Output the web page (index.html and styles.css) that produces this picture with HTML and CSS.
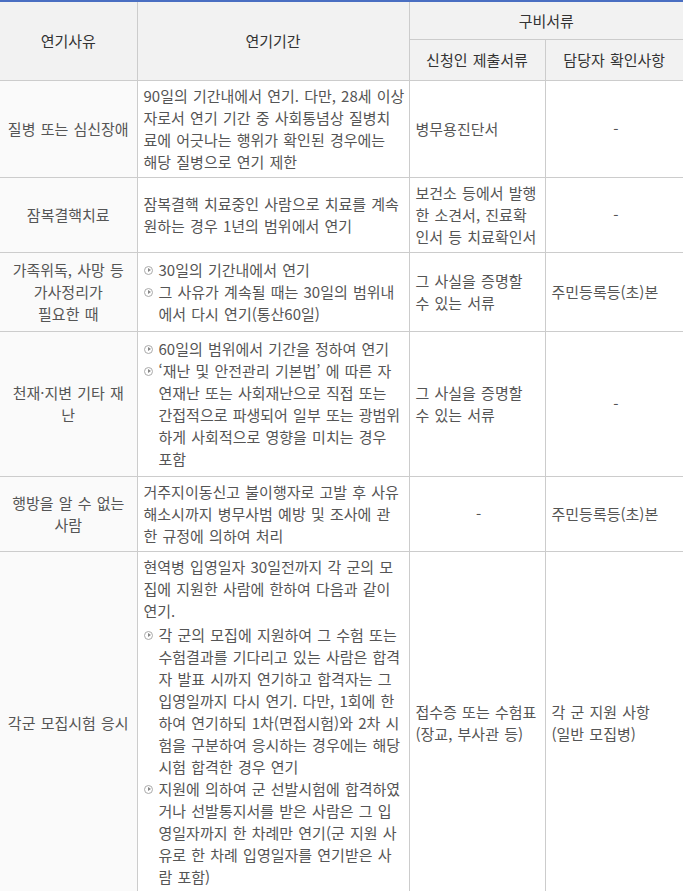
FILE: index.html
```html
<!DOCTYPE html>
<html lang="ko">
<head>
<meta charset="utf-8">
<title>연기사유</title>
<link rel="stylesheet" href="styles.css">
</head>
<body>
<table class="tbl">
  <colgroup>
    <col class="c1"><col class="c2"><col class="c3"><col class="c4">
  </colgroup>
  <thead>
    <tr>
      <th rowspan="2" class="first">연기사유</th>
      <th rowspan="2">연기기간</th>
      <th colspan="2" class="top">구비서류</th>
    </tr>
    <tr>
      <th class="sub">신청인 제출서류</th>
      <th class="sub">담당자 확인사항</th>
    </tr>
  </thead>
  <tbody>
    <tr>
      <th class="first">질병 또는 심신장애</th>
      <td class="brk">90일의 기간내에서 연기. 다만, 28세 이상<br>자로서 연기 기간 중 사회통념상 질병치<br>료에 어긋나는 행위가 확인된 경우에는<br>해당 질병으로 연기 제한</td>
      <td>병무용진단서</td>
      <td class="ctr">-</td>
    </tr>
    <tr>
      <th class="first">잠복결핵치료</th>
      <td class="brk">잠복결핵 치료중인 사람으로 치료를 계속<br>원하는 경우 1년의 범위에서 연기</td>
      <td class="brk">보건소 등에서 발행<br>한 소견서, 진료확<br>인서 등 치료확인서</td>
      <td class="ctr">-</td>
    </tr>
    <tr>
      <th class="first">가족위독, 사망 등<br>가사정리가<br>필요한 때</th>
      <td class="brk">
        <ul class="list">
          <li>30일의 기간내에서 연기</li>
          <li>그 사유가 계속될 때는 30일의 범위내<br>에서 다시 연기(통산60일)</li>
        </ul>
      </td>
      <td class="brk">그 사실을 증명할<br>수 있는 서류</td>
      <td>주민등록등(초)본</td>
    </tr>
    <tr>
      <th class="first">천재·지변 기타 재<br>난</th>
      <td class="brk">
        <ul class="list">
          <li>60일의 범위에서 기간을 정하여 연기</li>
          <li>‘재난 및 안전관리 기본법’ 에 따른 자<br>연재난 또는 사회재난으로 직접 또는<br>간접적으로 파생되어 일부 또는 광범위<br>하게 사회적으로 영향을 미치는 경우<br>포함</li>
        </ul>
      </td>
      <td class="brk">그 사실을 증명할<br>수 있는 서류</td>
      <td class="ctr">-</td>
    </tr>
    <tr>
      <th class="first">행방을 알 수 없는<br>사람</th>
      <td class="brk">거주지이동신고 불이행자로 고발 후 사유<br>해소시까지 병무사범 예방 및 조사에 관<br>한 규정에 의하여 처리</td>
      <td class="ctr">-</td>
      <td>주민등록등(초)본</td>
    </tr>
    <tr>
      <th class="first">각군 모집시험 응시</th>
      <td class="brk">
        <p class="lead">현역병 입영일자 30일전까지 각 군의 모<br>집에 지원한 사람에 한하여 다음과 같이<br>연기.</p>
        <ul class="list">
          <li>각 군의 모집에 지원하여 그 수험 또는<br>수험결과를 기다리고 있는 사람은 합격<br>자 발표 시까지 연기하고 합격자는 그<br>입영일까지 다시 연기. 다만, 1회에 한<br>하여 연기하되 1차(면접시험)와 2차 시<br>험을 구분하여 응시하는 경우에는 해당<br>시험 합격한 경우 연기</li>
          <li>지원에 의하여 군 선발시험에 합격하였<br>거나 선발통지서를 받은 사람은 그 입<br>영일자까지 한 차례만 연기(군 지원 사<br>유로 한 차례 입영일자를 연기받은 사<br>람 포함)</li>
        </ul>
      </td>
      <td class="brk">접수증 또는 수험표<br>(장교, 부사관 등)</td>
      <td class="brk">각 군 지원 사항<br>(일반 모집병)</td>
    </tr>
  </tbody>
</table>
</body>
</html>
```

FILE: styles.css
```css
html, body {
  margin: 0;
  padding: 0;
  background: #ffffff;
}

.tbl {
  width: 683px;
  border-collapse: collapse;
  table-layout: fixed;
  font-family: "Malgun Gothic", "Noto Sans CJK KR", "Noto Sans", sans-serif;
  font-size: 15px;
  line-height: 22px;
  word-spacing: 1px;
  color: #555555;
  border-top: 2px solid #4a6fc2;
}

.c1 { width: 137px; }
.c2 { width: 272px; }
.c3 { width: 136px; }
.c4 { width: 138px; }

.tbl th,
.tbl td {
  border: 1px solid #cccccc;
  padding: 4px 3px 4px 6px;
  vertical-align: middle;
  text-align: left;
  font-weight: normal;
}

.tbl td.brk { white-space: nowrap; }

.tbl .first { border-left: none; }
.tbl tr > :last-child { border-right: none; }

.tbl thead th {
  background: #f2f2f2;
  color: #333333;
  text-align: center;
  padding: 4px 6px;
  height: 30px;
}

.tbl thead th.top { height: 29px; }
.tbl thead th.sub { height: 32px; }

.tbl tbody th {
  background: #fafafa;
  text-align: center;
  padding: 4px 5px;
}

.tbl td.ctr { text-align: center; }

.lead { margin: 0; }

.list {
  list-style: none;
  margin: 2px 0;
  padding: 0;
}

.list li {
  position: relative;
  padding-left: 15px;
}

.list li::before {
  content: "";
  position: absolute;
  left: 0;
  top: 7px;
  width: 7px;
  height: 7px;
  border: 1px solid #aaaaaa;
  border-radius: 50%;
}

.list li::after {
  content: "";
  position: absolute;
  left: 4px;
  top: 9px;
  width: 0;
  height: 0;
  border-top: 2px solid transparent;
  border-bottom: 2px solid transparent;
  border-left: 3px solid #888888;
}
```
